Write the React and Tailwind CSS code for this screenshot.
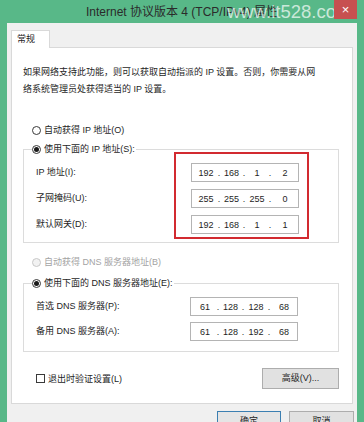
function Radio({ checked, disabled }) {
  return (
    <span
      className={`flex h-[9px] w-[9px] shrink-0 items-center justify-center rounded-full border ${
        disabled ? 'border-[#c8c8c8] bg-[#f2f2f2]' : 'border-[#3a3a3a] bg-white'
      }`}
    >
      {checked && <span className="h-[5px] w-[5px] rounded-full bg-[#1a1a1a]" />}
    </span>
  )
}

function IpBox({ parts }) {
  return (
    <div className="flex h-[19px] w-[108px] items-center border border-[#b4b4b4] bg-white pl-[3px] text-[9px] leading-[12px] text-[#1e1e1e]">
      <span className="w-[22px] text-center">{parts[0]}</span>
      <span className="w-[4px] text-center">.</span>
      <span className="w-[21px] text-center">{parts[1]}</span>
      <span className="w-[4px] text-center">.</span>
      <span className="w-[22px] text-center">{parts[2]}</span>
      <span className="w-[4px] text-center">.</span>
      <span className="w-[26px] text-center">{parts[3]}</span>
    </div>
  )
}

function Label({ children }) {
  return <div className="flex h-[19px] items-center">{children}</div>
}

export default function App() {
  return (
    <div className="flex h-[422px] w-[364px] flex-col overflow-hidden bg-[#58b888] font-['Liberation_Sans','Noto_Sans_CJK_SC',sans-serif] text-[9px] text-[#1e1e1e]">
      {/* title bar */}
      <div className="relative flex h-[23px] shrink-0 items-center justify-center">
        <span className="text-[12px] leading-[14px] text-[#2b2b2b]">Internet 协议版本 4 (TCP/IPv4) 属性</span>
        <span className="absolute left-[227px] top-[1px] text-[18.5px] leading-[22px] text-white/70">www.it528.com</span>
        <div className="absolute right-[7px] top-0 flex h-[19px] w-[23px] items-center justify-center bg-[#c75050] text-[13px] leading-[13px] text-white">
          ×
        </div>
      </div>

      {/* dialog body */}
      <div className="mx-[7px] flex-1 bg-[#f0f0f0] px-[4px] pt-[7px]">
        <div className="relative z-10 -mb-px flex h-[18px] w-[39px] items-center border border-b-0 border-[#d9d9d9] bg-white pl-[5px]">
          常规
        </div>

        <div className="h-[357px] border border-[#d9d9d9] bg-white pl-[11px]">
          <p className="pt-[16px] leading-[17px]">
            如果网络支持此功能，则可以获取自动指派的 IP 设置。否则，你需要从网
            <br />
            络系统管理员处获得适当的 IP 设置。
          </p>

          <div className="ml-[9px] mt-[25px] flex items-center gap-[3px] leading-[14px]">
            <Radio />
            <span>自动获得 IP 地址(O)</span>
          </div>

          <fieldset className="mt-[5px] w-[316px] border border-[#dcdcdc]">
            <legend className="ml-[8px] pr-[1px]">
              <span className="flex items-center gap-[3px] leading-[14px]">
                <Radio checked />
                <span>使用下面的 IP 地址(S):</span>
              </span>
            </legend>
            <div className="-mt-[4px] flex items-start pb-[3px] pl-[12px]">
              <div className="flex w-[138px] flex-col gap-[7px] pt-[11px]">
                <Label>IP 地址(I):</Label>
                <Label>子网掩码(U):</Label>
                <Label>默认网关(D):</Label>
              </div>
              <div className="flex w-[135px] flex-col gap-[7px] border-2 border-[#d22a30] pb-[3px] pl-[15px] pt-[9px]">
                <IpBox parts={['192', '168', '1', '2']} />
                <IpBox parts={['255', '255', '255', '0']} />
                <IpBox parts={['192', '168', '1', '1']} />
              </div>
            </div>
          </fieldset>

          <div className="ml-[9px] mt-[12px] flex items-center gap-[3px] leading-[14px] text-[#a3a3a3]">
            <Radio disabled />
            <span>自动获得 DNS 服务器地址(B)</span>
          </div>

          <fieldset className="mt-[7px] w-[316px] border border-[#dcdcdc]">
            <legend className="ml-[8px] pr-[1px]">
              <span className="flex items-center gap-[3px] leading-[14px]">
                <Radio checked />
                <span>使用下面的 DNS 服务器地址(E):</span>
              </span>
            </legend>
            <div className="flex flex-col gap-[6px] pb-[10px] pl-[12px] pt-[7px]">
              <div className="flex items-center">
                <div className="w-[154px]">首选 DNS 服务器(P):</div>
                <IpBox parts={['61', '128', '128', '68']} />
              </div>
              <div className="flex items-center">
                <div className="w-[154px]">备用 DNS 服务器(A):</div>
                <IpBox parts={['61', '128', '192', '68']} />
              </div>
            </div>
          </fieldset>

          <div className="mt-[16px] flex w-[316px] items-center justify-between">
            <div className="flex items-center gap-[3px] pl-[13px] leading-[14px]">
              <span className="h-[9px] w-[9px] border border-[#3a3a3a] bg-white" />
              <span>退出时验证设置(L)</span>
            </div>
            <div className="flex h-[21px] w-[77px] items-center justify-center border border-[#adadad] bg-[#e1e1e1]">
              高级(V)...
            </div>
          </div>
        </div>

        <div className="-mr-px mt-[7px] flex justify-end gap-[8px]">
          <div className="flex h-[22px] w-[64px] items-center justify-center border border-[#3c7fb1] bg-[#e5e5e5]">
            确定
          </div>
          <div className="flex h-[22px] w-[65px] items-center justify-center border border-[#adadad] bg-[#e1e1e1]">
            取消
          </div>
        </div>
      </div>
    </div>
  )
}
